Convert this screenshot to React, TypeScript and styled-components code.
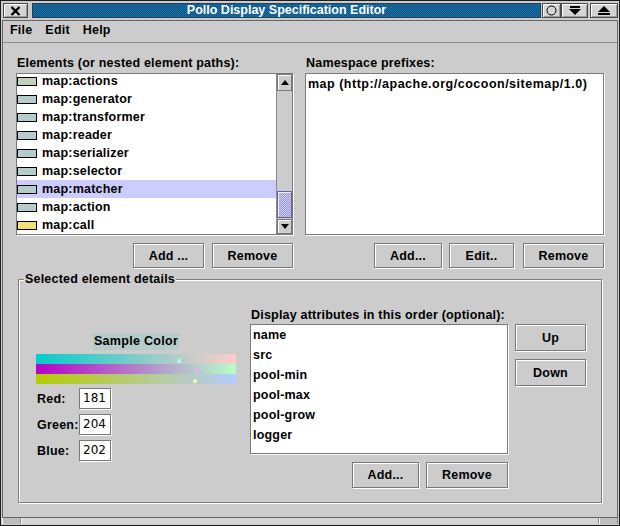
import React from "react";
import styled, { createGlobalStyle } from "styled-components";

const Global = createGlobalStyle`
  html, body { margin: 0; padding: 0; background: #cccccc; }
  body { font-family: "Liberation Sans", Arial, sans-serif; }
  * { box-sizing: border-box; }
`;

const UI_FONT = `bold 12.5px "Liberation Sans", Arial, sans-serif`;

const Window = styled.div`
  width: 620px;
  height: 526px;
  background: #cccccc;
  border: 1px solid #1e1e1e;
  padding: 1px;
  display: flex;
  flex-direction: column;
`;

const TitleBar = styled.div`
  height: 18px;
  flex: none;
  display: flex;
  align-items: flex-start;
  padding-top: 1px;
`;

const FrameButton = styled.div<{ $w: number; $ml: number }>`
  width: ${(p) => p.$w}px;
  height: 15px;
  margin-left: ${(p) => p.$ml}px;
  flex: none;
  background: #d4d4d4;
  border: 1px solid #4a4a4a;
  box-shadow: inset 1px 1px 0 #ffffff, inset -1px -1px 0 #9a9a9a;
  display: flex;
  align-items: center;
  justify-content: center;
`;

const TitleStrip = styled.div`
  flex: 1;
  height: 15px;
  margin-left: 4px;
  border: 1px solid #23415a;
  background-color: #0c5a8a;
  background-image: repeating-conic-gradient(#1f73a6 0 25%, #0a5283 0 50%);
  background-size: 2px 2px;
  color: #ffffff;
  font: bold 12.5px "Liberation Sans", Arial, sans-serif;
  letter-spacing: 0px;
  line-height: 13px;
  text-align: center;
  white-space: nowrap;
`;

const Client = styled.div`
  flex: 1;
  display: flex;
  flex-direction: column;
  border: 1px solid #666666;
  min-height: 0;
`;

const MenuBar = styled.div`
  height: 22px;
  flex: none;
  display: flex;
  align-items: flex-start;
  padding: 2px 0 0 1px;
  border-bottom: 1px solid #8c8c8c;
`;

const MenuItem = styled.div`
  font: ${UI_FONT};
  letter-spacing: 0.2px;
  line-height: 15px;
  padding: 0 6px 0 6px;
  margin-right: 1px;
  color: #000;
`;

const Main = styled.div`
  flex: 1;
  display: flex;
  flex-direction: column;
  padding: 13px 13px 0 13px;
`;

const TopGrid = styled.div`
  display: grid;
  grid-template-columns: 277px 299px;
  column-gap: 12px;
`;

const Column = styled.div`
  display: flex;
  flex-direction: column;
`;

const FieldLabel = styled.div<{ $mb?: number }>`
  font: ${UI_FONT};
  letter-spacing: 0.2px;
  line-height: 14px;
  height: 14px;
  padding-left: 1px;
  margin-bottom: ${(p) => p.$mb ?? 3}px;
  white-space: nowrap;
  color: #000;
`;

const ListBox = styled.div<{ $h: number }>`
  height: ${(p) => p.$h}px;
  background: #ffffff;
  border: 1px solid #7a7a7a;
  box-shadow: 1px 1px 0 #ffffff;
  display: flex;
  overflow: hidden;
`;

const Rows = styled.div<{ $offset?: number }>`
  flex: 1;
  min-width: 0;
  display: flex;
  flex-direction: column;
  margin-top: ${(p) => p.$offset ?? 0}px;
`;

const ElementRow = styled.div<{ $selected?: boolean }>`
  height: 18px;
  flex: none;
  display: flex;
  align-items: center;
  background: ${(p) => (p.$selected ? "#ccccff" : "transparent")};
  font: ${UI_FONT};
  letter-spacing: 0.2px;
  color: #000;
  white-space: nowrap;
`;

const Swatch = styled.span<{ $color: string }>`
  width: 20px;
  height: 9px;
  flex: none;
  background: ${(p) => p.$color};
  border: 1px solid #000;
  margin-right: 5px;
`;

const TextRow = styled.div<{ $h: number; $ls?: number }>`
  height: ${(p) => p.$h}px;
  flex: none;
  display: flex;
  align-items: center;
  padding-left: 2px;
  font: ${UI_FONT};
  letter-spacing: ${(p) => p.$ls ?? 0.2}px;
  color: #000;
  white-space: nowrap;
`;

const ScrollBar = styled.div`
  width: 16px;
  flex: none;
  display: flex;
  flex-direction: column;
  background: #cccccc;
  border-left: 1px solid #8a8a8a;
`;

const ScrollArrow = styled.div<{ $h: number }>`
  height: ${(p) => p.$h}px;
  flex: none;
  background: #cccccc;
  border: 1px solid #7a7a7a;
  box-shadow: inset 1px 1px 0 #ffffff;
  display: flex;
  align-items: center;
  justify-content: center;
`;

const ScrollTrack = styled.div`
  flex: 1;
  display: flex;
  flex-direction: column;
  justify-content: flex-end;
  padding-bottom: 1px;
`;

const ScrollThumb = styled.div`
  height: 27px;
  border: 1px solid #66669a;
  background-color: #ccccff;
  background-image: repeating-conic-gradient(#9999cc 0 25%, #ccccff 0 50%);
  background-size: 2px 2px;
  box-shadow: inset 1px 1px 0 #eeeeff;
`;

const ButtonRow = styled.div<{ $gap: number; $mt?: number }>`
  display: flex;
  justify-content: flex-end;
  gap: ${(p) => p.$gap}px;
  margin-top: ${(p) => p.$mt ?? 8}px;
`;

const Btn = styled.button<{ $w: number; $h?: number; $ml?: number }>`
  width: ${(p) => p.$w}px;
  height: ${(p) => p.$h ?? 25}px;
  margin: 0 0 0 ${(p) => p.$ml ?? 0}px;
  padding: 0;
  background: #cccccc;
  border: 1px solid #7a7a7a;
  box-shadow: inset 1px 1px 0 #ffffff, 1px 1px 0 #ffffff;
  font: ${UI_FONT};
  letter-spacing: 0.2px;
  color: #000;
  cursor: default;
`;

const Group = styled.div`
  height: 224px;
  margin: 11px 2px 0 2px;
  border: 1px solid #808080;
  box-shadow: inset 1px 1px 0 #ffffff, 1px 1px 0 #ffffff;
  display: flex;
  flex-direction: column;
`;

const GroupTitle = styled.div`
  width: fit-content;
  margin: -8px 0 0 5px;
  padding: 0 1px;
  background: #cccccc;
  font: ${UI_FONT};
  letter-spacing: 0.2px;
  line-height: 14px;
  color: #000;
`;

const GroupBody = styled.div`
  flex: 1;
  display: flex;
  align-items: flex-start;
  padding-left: 17px;
`;

const ColorPanel = styled.div`
  width: 200px;
  margin-top: 47px;
  display: flex;
  flex-direction: column;
`;

const SampleLabel = styled.div<{ $bg: string }>`
  align-self: center;
  height: 17px;
  padding: 0 1px;
  background: ${(p) => p.$bg};
  font: ${UI_FONT};
  letter-spacing: 0.3px;
  line-height: 17px;
  color: #000;
`;

const Sliders = styled.svg`
  display: block;
  margin-top: 4px;
`;

const Fields = styled.div`
  display: flex;
  flex-direction: column;
  gap: 5px;
  margin-top: 4px;
`;

const FieldRow = styled.div`
  display: flex;
  align-items: center;
  height: 21px;
`;

const FieldName = styled.span`
  width: 43px;
  padding-left: 1px;
  font: ${UI_FONT};
  letter-spacing: 0.2px;
  color: #000;
`;

const NumberBox = styled.div`
  width: 32px;
  height: 21px;
  background: #ffffff;
  border: 1px solid #7a7a7a;
  box-shadow: 1px 1px 0 #ffffff;
  padding-left: 3px;
  font: 12px "DejaVu Sans", "Liberation Sans", sans-serif;
  line-height: 19px;
  color: #000;
`;

const AttrPanel = styled.div`
  margin: 22px 0 0 14px;
  display: grid;
  grid-template-columns: 258px 71px;
  column-gap: 7px;
`;

const SideButtons = styled.div`
  display: flex;
  flex-direction: column;
  gap: 8px;
`;

const GridSpan = styled.div`
  grid-column: 1 / 2;
`;

const BottomFrame = styled.div`
  height: 6px;
  flex: none;
  display: flex;
`;

const Handle = styled.div<{ $w?: number; $bg: string }>`
  ${(p) => (p.$w ? `width: ${p.$w}px; flex: none;` : "flex: 1;")}
  background: ${(p) => p.$bg};
  border-left: 1px solid #ffffff;
  border-right: 1px solid #8a8a8a;
`;

const elements = [
  { name: "map:actions", color: "#c2d0b8" },
  { name: "map:generator", color: "#b5ccca" },
  { name: "map:transformer", color: "#b5ccca" },
  { name: "map:reader", color: "#b5ccca" },
  { name: "map:serializer", color: "#b5ccca" },
  { name: "map:selector", color: "#b5ccca" },
  { name: "map:matcher", color: "#b5ccca", selected: true },
  { name: "map:action", color: "#b5ccca" },
  { name: "map:call", color: "#f2e07a" },
];

const attributes = ["name", "src", "pool-min", "pool-max", "pool-grow", "logger"];

const rgb = { r: 181, g: 204, b: 202 };

const Plus = ({ x, y, c }: { x: number; y: number; c: string }) => (
  <g fill={c}>
    <rect x={x - 2} y={y - 0.5} width={4} height={2} />
    <rect x={x - 0.5} y={y - 2} width={2} height={4} />
  </g>
);

const ColorSliders = () => {
  const pos = (v: number) => Math.round((v / 255) * 200);
  return (
    <Sliders width={200} height={30} viewBox="0 0 200 30">
      <defs>
        <linearGradient id="gR" x1="0" x2="1" y1="0" y2="0">
          <stop offset="0" stopColor={`rgb(0,${rgb.g},${rgb.b})`} />
          <stop offset="1" stopColor={`rgb(255,${rgb.g},${rgb.b})`} />
        </linearGradient>
        <linearGradient id="gG" x1="0" x2="1" y1="0" y2="0">
          <stop offset="0" stopColor={`rgb(${rgb.r},0,${rgb.b})`} />
          <stop offset="1" stopColor={`rgb(${rgb.r},255,${rgb.b})`} />
        </linearGradient>
        <linearGradient id="gB" x1="0" x2="1" y1="0" y2="0">
          <stop offset="0" stopColor={`rgb(${rgb.r},${rgb.g},0)`} />
          <stop offset="1" stopColor={`rgb(${rgb.r},${rgb.g},255)`} />
        </linearGradient>
      </defs>
      <rect x={0} y={0} width={200} height={10} fill="url(#gR)" />
      <rect x={0} y={10} width={200} height={10} fill="url(#gG)" />
      <rect x={0} y={20} width={200} height={10} fill="url(#gB)" />
      <Plus x={pos(rgb.r) + 1} y={7} c="#aaffff" />
      <Plus x={pos(rgb.g) + 1} y={17} c="#ffaaff" />
      <Plus x={pos(rgb.b) + 1} y={27} c="#ffffaa" />
    </Sliders>
  );
};

const ArrowUp = () => (
  <svg width="8" height="5" viewBox="0 0 8 5">
    <path d="M4 0 L8 5 L0 5 Z" fill="#000" />
  </svg>
);
const ArrowDown = () => (
  <svg width="8" height="5" viewBox="0 0 8 5">
    <path d="M0 0 L8 0 L4 5 Z" fill="#000" />
  </svg>
);

export default function App() {
  return (
    <>
      <Global />
      <Window>
        <TitleBar>
          <FrameButton $w={25} $ml={1}>
            <svg width="11" height="10" viewBox="0 0 11 10">
              <path d="M1.5 1 L9.5 9 M9.5 1 L1.5 9" stroke="#000" strokeWidth="2.4" />
            </svg>
          </FrameButton>
          <TitleStrip>Pollo Display Specification Editor</TitleStrip>
          <FrameButton $w={19} $ml={1}>
            <svg width="11" height="11" viewBox="0 0 11 11">
              <circle cx="5.5" cy="5.5" r="4.5" fill="none" stroke="#000" strokeWidth="1" />
            </svg>
          </FrameButton>
          <FrameButton $w={27} $ml={0}>
            <svg width="12" height="9" viewBox="0 0 12 9">
              <rect x="1" y="0" width="10" height="2" fill="#000" />
              <path d="M0 3 L12 3 L6 9 Z" fill="#000" />
            </svg>
          </FrameButton>
          <FrameButton $w={28} $ml={2}>
            <svg width="12" height="9" viewBox="0 0 12 9">
              <path d="M6 0 L12 6 L0 6 Z" fill="#000" />
              <rect x="0" y="7" width="12" height="2" fill="#000" />
            </svg>
          </FrameButton>
        </TitleBar>
        <Client>
          <MenuBar>
            <MenuItem>File</MenuItem>
            <MenuItem>Edit</MenuItem>
            <MenuItem>Help</MenuItem>
          </MenuBar>
          <Main>
            <TopGrid>
              <Column>
                <FieldLabel>Elements (or nested element paths):</FieldLabel>
                <ListBox $h={162}>
                  <Rows $offset={-2}>
                    {elements.map((e) => (
                      <ElementRow key={e.name} $selected={e.selected}>
                        <Swatch $color={e.color} />
                        {e.name}
                      </ElementRow>
                    ))}
                  </Rows>
                  <ScrollBar>
                    <ScrollArrow $h={17}>
                      <ArrowUp />
                    </ScrollArrow>
                    <ScrollTrack>
                      <ScrollThumb />
                    </ScrollTrack>
                    <ScrollArrow $h={15}>
                      <ArrowDown />
                    </ScrollArrow>
                  </ScrollBar>
                </ListBox>
                <ButtonRow $gap={8}>
                  <Btn $w={71}>Add ...</Btn>
                  <Btn $w={81}>Remove</Btn>
                </ButtonRow>
              </Column>
              <Column>
                <FieldLabel>Namespace prefixes:</FieldLabel>
                <ListBox $h={162}>
                  <Rows>
                    <TextRow $h={19} $ls={0.5}>map (http://apache.org/cocoon/sitemap/1.0)</TextRow>
                  </Rows>
                </ListBox>
                <ButtonRow $gap={7}>
                  <Btn $w={68}>Add...</Btn>
                  <Btn $w={65}>Edit..</Btn>
                  <Btn $w={81} $ml={2}>Remove</Btn>
                </ButtonRow>
              </Column>
            </TopGrid>
            <Group>
              <GroupTitle>Selected element details</GroupTitle>
              <GroupBody>
                <ColorPanel>
                  <SampleLabel $bg={`rgb(${rgb.r},${rgb.g},${rgb.b})`}>Sample Color</SampleLabel>
                  <ColorSliders />
                  <Fields>
                    <FieldRow>
                      <FieldName>Red:</FieldName>
                      <NumberBox>{rgb.r}</NumberBox>
                    </FieldRow>
                    <FieldRow>
                      <FieldName>Green:</FieldName>
                      <NumberBox>{rgb.g}</NumberBox>
                    </FieldRow>
                    <FieldRow>
                      <FieldName>Blue:</FieldName>
                      <NumberBox>{rgb.b}</NumberBox>
                    </FieldRow>
                  </Fields>
                </ColorPanel>
                <AttrPanel>
                  <GridSpan>
                    <FieldLabel $mb={2}>Display attributes in this order (optional):</FieldLabel>
                  </GridSpan>
                  <div />
                  <ListBox $h={130}>
                    <Rows>
                      {attributes.map((a) => (
                        <TextRow key={a} $h={20}>
                          {a}
                        </TextRow>
                      ))}
                    </Rows>
                  </ListBox>
                  <SideButtons>
                    <Btn $w={71} $h={27}>Up</Btn>
                    <Btn $w={71} $h={27}>Down</Btn>
                  </SideButtons>
                  <GridSpan>
                    <ButtonRow $gap={7}>
                      <Btn $w={67} $h={26}>Add...</Btn>
                      <Btn $w={82} $h={26}>Remove</Btn>
                    </ButtonRow>
                  </GridSpan>
                </AttrPanel>
              </GroupBody>
            </Group>
          </Main>
        </Client>
        <BottomFrame>
          <Handle $w={19} $bg="#bdbdbd" />
          <Handle $bg="#d6d6d6" />
          <Handle $w={19} $bg="#bdbdbd" />
        </BottomFrame>
      </Window>
    </>
  );
}
